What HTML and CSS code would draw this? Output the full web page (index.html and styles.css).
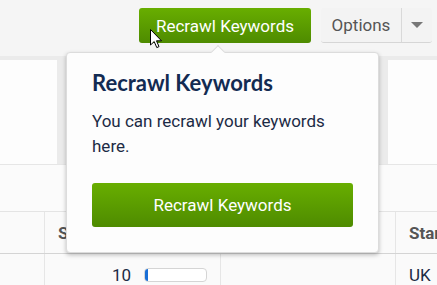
FILE: index.html
```html
<!DOCTYPE html>
<html lang="en">
<head>
    <meta charset="UTF-8">
    <meta name="viewport" content="width=device-width, initial-scale=1.0">
    <title>Keywords</title>
    <link rel="stylesheet" href="styles.css">
</head>
<body>
    <div class="toolbar">
        <button class="btn-green btn-recrawl">Recrawl Keywords</button>
        <div class="btn-options">
            <span class="options-label">Options</span>
            <span class="options-caret"></span>
        </div>
    </div>

    <div class="stats">
        <div class="stat-box stat-first"></div>
        <div class="stat-box stat-mid"></div>
        <div class="stat-box stat-last"></div>
    </div>

    <div class="spacer"></div>

    <div class="table">
        <div class="row head">
            <div class="cell c1"></div>
            <div class="cell c2">Search Volume</div>
            <div class="cell c3">Rank</div>
            <div class="cell c4">Start</div>
        </div>
        <div class="row">
            <div class="cell c1"></div>
            <div class="cell c2 num">10 <span class="bar"><span class="bar-fill"></span></span></div>
            <div class="cell c3"></div>
            <div class="cell c4">UK</div>
        </div>
    </div>

    <div class="popover">
        <span class="popover-arrow"></span>
        <h3>Recrawl Keywords</h3>
        <p>You can recrawl your keywords here.</p>
        <button class="btn-green btn-wide">Recrawl Keywords</button>
    </div>

    <svg class="cursor" width="13" height="20" viewBox="0 0 13 20">
        <path d="M0.5 0.5 L0.5 16 L4.2 12.6 L6.8 18.6 L9 17.6 L6.5 11.8 L11.5 11.8 Z" fill="#fff" stroke="#000" stroke-width="1"/>
    </svg>
</body>
</html>
```

FILE: styles.css
```css
body {
    margin: 0;
    background-color: #f5f5f5;
    font-family: Roboto, "Liberation Sans", sans-serif;
    font-size: 17px;
    color: #1c2b45;
    position: relative;
    height: 285px;
    overflow: hidden;
}
.toolbar {
    display: flex;
    justify-content: flex-end;
    align-items: flex-start;
    gap: 10px;
    height: 52px;
    padding: 8px 5px 0 0;
    box-sizing: border-box;
}
.btn-green {
    font-family: Roboto, "Liberation Sans", sans-serif;
    font-size: 17px;
    color: #fff;
    background: linear-gradient(#68ae00, #4e8b00);
    border: none;
    border-radius: 3px;
}
.btn-recrawl {
    width: 172px;
    height: 35px;
    padding: 0;
}
.btn-options {
    display: flex;
    height: 35px;
    background-color: #f3f3f3;
    border-bottom: 1px solid #d6d6d6;
    border-radius: 3px;
    box-sizing: border-box;
}
.options-label {
    width: 80px;
    line-height: 34px;
    text-align: center;
    color: #555;
    border-right: 1px solid #d9d9d9;
}
.options-caret {
    width: 30px;
    position: relative;
}
.options-caret::after {
    content: "";
    position: absolute;
    left: 9px;
    top: 14px;
    border-left: 6px solid transparent;
    border-right: 6px solid transparent;
    border-top: 6px solid #777;
}
.stats {
    display: flex;
    gap: 9px;
    height: 108px;
    margin-top: 4px;
    padding-top: 4px;
    background-color: #ebebeb;
    box-sizing: border-box;
}
.stat-box {
    background-color: #fdfdfd;
}
.stat-first {
    width: 57px;
}
.stat-mid {
    flex: 1;
}
.stat-last {
    width: 49px;
}
.spacer {
    height: 47px;
    background-color: #fbfbfb;
    border-top: 1px solid #e6e6e6;
    box-sizing: border-box;
}
.table {
    background-color: #fafafa;
    border-top: 1px solid #e4e4e4;
}
.row {
    display: flex;
    height: 41px;
    border-bottom: 1px solid #e2e2e2;
}
.row.head {
    font-weight: bold;
    color: #555;
    border-bottom-color: #d4d4d4;
}
.cell {
    display: flex;
    align-items: center;
    padding-left: 13px;
    box-sizing: border-box;
    white-space: nowrap;
    overflow: hidden;
}
.c1 {
    width: 45px;
    border-right: 1px solid #e6e6e6;
}
.c2 {
    width: 176px;
    border-right: 1px solid #e6e6e6;
}
.c3 {
    width: 175px;
    border-right: 1px solid #e6e6e6;
}
.c4 {
    flex: 1;
}
.num {
    padding-left: 67px;
    gap: 13px;
}
.bar {
    display: inline-block;
    width: 61px;
    height: 12px;
    border: 1px solid #d5d5d5;
    border-radius: 4px;
    background-color: #fff;
    overflow: hidden;
}
.bar-fill {
    display: block;
    width: 3px;
    height: 100%;
    background-color: #1a6fd6;
}
.popover {
    position: absolute;
    left: 66px;
    top: 52px;
    width: 313px;
    padding: 16px 25px 25px;
    box-sizing: border-box;
    background-color: #fdfdfd;
    border: 1px solid #dcdcdc;
    border-radius: 4px;
    box-shadow: 0 2px 4px rgba(0, 0, 0, 0.25);
}
.popover-arrow {
    position: absolute;
    left: 146px;
    top: -6px;
    width: 9px;
    height: 9px;
    background-color: #fdfdfd;
    border-left: 1px solid #dcdcdc;
    border-top: 1px solid #dcdcdc;
    transform: rotate(45deg);
}
.popover h3 {
    margin: 0;
    font-family: Lato, "Open Sans", sans-serif;
    font-size: 22px;
    font-weight: bold;
    line-height: 28px;
    color: #132b52;
}
.popover p {
    margin: 12px 0 24px;
    line-height: 25px;
}
.btn-wide {
    display: block;
    width: 100%;
    height: 44px;
}
.cursor {
    position: absolute;
    left: 150px;
    top: 29px;
}
```
